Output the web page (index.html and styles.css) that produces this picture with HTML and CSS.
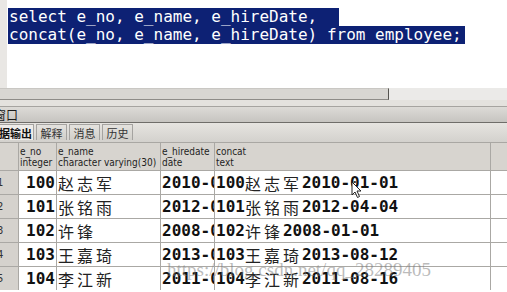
FILE: index.html
```html
<!DOCTYPE html>
<html lang="zh">
<head>
    <meta charset="UTF-8">
    <title>SQL 查询 - employee</title>
    <link rel="stylesheet" href="styles.css">
</head>
<body>
    <div class="editor">
        <div class="gutter"></div>
        <div class="code">
            <div class="line"><span class="sel sel-1">select e_no, e_name, e_hireDate,</span></div>
            <div class="line"><span class="sel sel-2">concat(e_no, e_name, e_hireDate) from employee;</span></div>
        </div>
    </div>

    <div class="hscroll">
        <div class="thumb"></div>
        <div class="track"></div>
    </div>

    <div class="band"></div>

    <div class="titlebar"><span class="title">窗口</span></div>

    <div class="tabs">
        <div class="tab active"><span class="tab-label">数据输出</span></div>
        <div class="tab">解释</div>
        <div class="tab">消息</div>
        <div class="tab">历史</div>
    </div>

    <div class="grid">
        <div class="hcell corner"></div>
        <div class="hcell">e_no<br>integer</div>
        <div class="hcell">e_name<br>character varying(30)</div>
        <div class="hcell">e_hiredate<br>date</div>
        <div class="hcell">concat<br>text</div>
        <div class="hcell filler"></div>

        <div class="rownum">1</div>
        <div class="cell num">100</div>
        <div class="cell"><span class="zh">赵志军</span></div>
        <div class="cell">2010-01-01</div>
        <div class="cell">100<span class="zh">赵志军</span>2010-01-01</div>
        <div class="cell blank"></div>

        <div class="rownum">2</div>
        <div class="cell num">101</div>
        <div class="cell"><span class="zh">张铭雨</span></div>
        <div class="cell">2012-04-04</div>
        <div class="cell">101<span class="zh">张铭雨</span>2012-04-04</div>
        <div class="cell blank"></div>

        <div class="rownum">3</div>
        <div class="cell num">102</div>
        <div class="cell"><span class="zh">许锋</span></div>
        <div class="cell">2008-01-01</div>
        <div class="cell">102<span class="zh">许锋</span>2008-01-01</div>
        <div class="cell blank"></div>

        <div class="rownum">4</div>
        <div class="cell num">103</div>
        <div class="cell"><span class="zh">王嘉琦</span></div>
        <div class="cell">2013-08-12</div>
        <div class="cell">103<span class="zh">王嘉琦</span>2013-08-12</div>
        <div class="cell blank"></div>

        <div class="rownum">5</div>
        <div class="cell num">104</div>
        <div class="cell"><span class="zh">李江新</span></div>
        <div class="cell">2011-08-16</div>
        <div class="cell">104<span class="zh">李江新</span>2011-08-16</div>
        <div class="cell blank"></div>
    </div>

    <!-- overlays: mouse pointer and the blog watermark -->
    <svg class="cursor" width="12" height="18" viewBox="0 0 12 18">
        <path d="M1 1 L1 14 L4 11 L6.5 16.5 L8.5 15.5 L6 10 L10 10 Z" fill="#fff" stroke="#222" stroke-width="1"/>
    </svg>
    <div class="watermark">https://blog.csdn.net/qq_28289405</div>
</body>
</html>
```

FILE: styles.css
```css
* {
    margin: 0;
    padding: 0;
    box-sizing: border-box;
}

body {
    position: relative;
    width: 507px;
    height: 292px;
    overflow: hidden;
    background-color: #ffffff;
    font-family: 'DejaVu Sans', 'Noto Sans CJK SC', sans-serif;
    color: #222;
}

/* query editor */
.editor {
    display: flex;
    height: 88px;
}

.gutter {
    width: 7px;
    background-color: #e9e7e4;
}

.code {
    flex: 1;
    padding-top: 7px;
    padding-left: 1px;
    background-color: #fff;
}

.line {
    height: 18px;
}

.sel {
    display: inline-block;
    height: 18px;
    line-height: 18px;
    padding-left: 1px;
    white-space: pre;
    background-color: #0d2174;
    color: #fff;
    font-family: 'DejaVu Sans Mono', monospace;
    font-size: 16px;
}

.sel-1 {
    width: 331px;
}

.sel-2 {
    width: 457px;
}

/* horizontal scrollbar */
.hscroll {
    display: flex;
    height: 12px;
}

.thumb {
    width: 389px;
    background-color: #d8d6d2;
    border-top: 1px solid #c9c7c3;
    border-right: 1px solid #55534f;
    border-bottom: 1px solid #8e8c88;
}

.track {
    flex: 1;
    background-color: #ebeae8;
}

.band {
    height: 7px;
    background-color: #e4e2de;
    border-bottom: 1px solid #a6a4a0;
}

/* output pane */
.titlebar {
    display: flex;
    align-items: center;
    height: 16px;
    background: linear-gradient(#dddbd7, #c6c4c0);
    border-bottom: 1px solid #6f6d69;
    overflow: hidden;
}

.title {
    margin-left: -6px;
    font-size: 12px;
    color: #1a1a1a;
}

.tabs {
    display: flex;
    align-items: flex-end;
    gap: 2px;
    height: 20px;
    padding-bottom: 2px;
    background: linear-gradient(#e6e4e0, #d3d1cd);
    border-bottom: 1px solid #a9a7a3;
    overflow: hidden;
}

.tab {
    display: flex;
    align-items: center;
    justify-content: center;
    width: 31px;
    height: 16px;
    font-size: 11px;
    color: #333;
    background: linear-gradient(#e4e2de, #d0cec9);
    border: 1px solid #a5a3a0;
    border-bottom: none;
}

.tab.active {
    width: 34px;
    justify-content: flex-end;
    padding-right: 1px;
    background-color: #eeece9;
    background-image: none;
    border-left: none;
    font-weight: bold;
    color: #111;
}

.tab-label {
    white-space: nowrap;
}

/* result grid */
.grid {
    display: grid;
    grid-template-columns: 18px 37px 103px 53px 275px 16px;
    grid-template-rows: 27px repeat(5, 23px);
    gap: 1px;
    background-color: #aaa8a4;
}

.hcell {
    padding: 3px 0 0 1px;
    font-family: 'DejaVu Sans Condensed', 'DejaVu Sans', sans-serif;
    font-size: 10px;
    line-height: 11px;
    color: #1e1e1e;
    white-space: nowrap;
    overflow: hidden;
    background-color: #d7d4cf;
}

.rownum {
    display: flex;
    align-items: center;
    text-indent: -3px;
    font-size: 10px;
    color: #333;
    overflow: hidden;
    background-color: #d5d2cd;
}

.cell {
    display: flex;
    align-items: center;
    padding-left: 1px;
    font-family: 'DejaVu Sans Mono', 'Noto Sans CJK SC', monospace;
    font-size: 16px;
    font-weight: bold;
    color: #111;
    white-space: nowrap;
    overflow: hidden;
    background-color: #fff;
}

.cell.num {
    justify-content: flex-end;
    padding-right: 1px;
}

.zh {
    font-family: 'Noto Sans CJK SC', sans-serif;
    font-weight: normal;
    letter-spacing: 3px;
    color: #222;
}

.watermark {
    position: absolute;
    left: 167px;
    top: 259px;
    font-family: 'Liberation Serif', serif;
    font-size: 19px;
    color: rgba(120, 120, 120, 0.5);
    white-space: nowrap;
}

.cursor {
    position: absolute;
    left: 351px;
    top: 181px;
}
```
